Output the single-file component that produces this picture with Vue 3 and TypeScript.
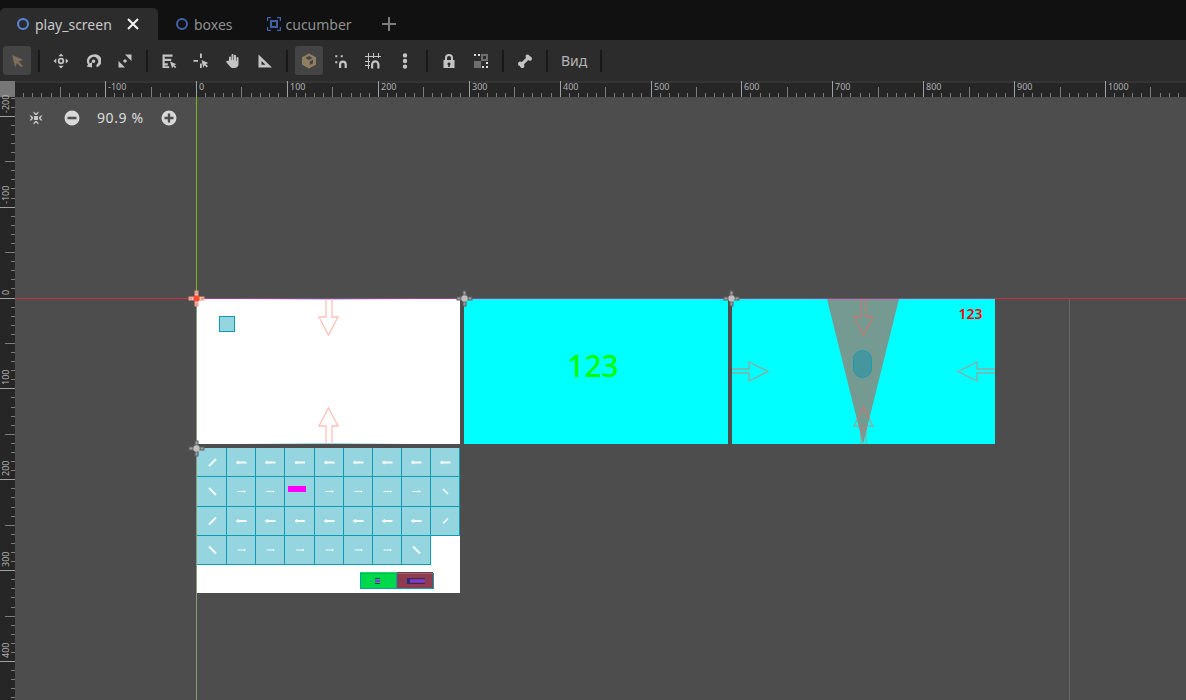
<script setup lang="ts">
const ORIGIN_X = 196.5
const ORIGIN_Y = 298
const SCALE = 0.909

interface Tick { p: number; len: number; major: boolean }
interface Label { p: number; t: string }

function ticks(from: number, to: number, origin: number): Tick[] {
  const out: Tick[] = []
  for (let v = from; v <= to; v += 10) {
    const p = Math.floor(origin + v * SCALE) + 0.5
    out.push({ p, len: v % 100 === 0 ? 16 : v % 50 === 0 ? 10 : 4, major: v % 100 === 0 })
  }
  return out
}

const hTicks = ticks(-200, 1100, ORIGIN_X).filter(t => t.p > 15)
const vTicks = ticks(-220, 450, ORIGIN_Y).filter(t => t.p > 97)

const hLabels: Label[] = []
for (let v = -100; v <= 1000; v += 100) hLabels.push({ p: Math.floor(ORIGIN_X + v * SCALE), t: String(v) })
const vLabels: Label[] = []
for (let v = -200; v <= 400; v += 100) vLabels.push({ p: Math.floor(ORIGIN_Y + v * SCALE), t: String(v) })

const xs = [197, 226, 255, 284, 314, 343, 372, 401, 430, 459]
const ys = [448, 476, 506, 535, 564]
const rows = [9, 9, 9, 8]

interface Cell { x: number; y: number; w: number; h: number; kind: string }
const cells: Cell[] = []
rows.forEach((n, r) => {
  for (let c = 0; c < n; c++) {
    let kind = r % 2 === 0 ? 'left' : 'right'
    if (c === 0) kind = r % 2 === 0 ? 'up' : 'down'
    if (c === n - 1 && r === 1) kind = 'downThin'
    if (c === n - 1 && r === 2) kind = 'upThin'
    if (c === n - 1 && r === 3) kind = 'down'
    if (r === 1 && c === 3) kind = 'none'
    cells.push({ x: xs[c], y: ys[r], w: xs[c + 1] - xs[c], h: ys[r + 1] - ys[r], kind })
  }
})

const handles = [
  { x: 464, y: 298 },
  { x: 731, y: 298 },
  { x: 196, y: 448 },
]

type Item = { id: string; active?: boolean; d: string; tone?: string; rule?: 'nonzero' | 'evenodd' }
const groups: Item[][] = [
  [{ id: 'select', active: true, tone: 'brown', d: 'M3 2l11 4.800-4.500 1.700 4.300 4.200-1.600 1.600-4.200-4.300-1.700 4.500z' }],
  [
    { id: 'move', d: 'M8 .5l2.600 2.800H5.400zM8 15.500l-2.600-2.800h5.200zM.5 8l2.800-2.600v5.200zM15.500 8l-2.800 2.600V5.400zM8 4.800a3.200 3.200 0 1 0 0 6.400 3.200 3.200 0 0 0 0-6.400zM8 6.600a1.400 1.400 0 1 1 0 2.800 1.400 1.400 0 0 1 0-2.800z' },
    { id: 'rotate', d: 'M8.500 1.500a6.500 6.500 0 0 0-5.300 10.300L1.500 13.500 7 14.500V9l-2.200 1.500A4.400 4.400 0 1 1 11.500 11.800V14.200A6.500 6.500 0 0 0 8.500 1.500zM8.500 6.500a1.800 1.800 0 1 0 0 3.600 1.800 1.800 0 0 0 0-3.600z' },
    { id: 'scale', d: 'M8 1.500H14.500V8zM1.500 8V14.500H8zM8 5.900L10.100 8 8 10.100 5.900 8z' },
  ],
  [
    { id: 'list', d: 'M1.500 1.500h10v2.200H3.700v2.100h6.500V8H3.700v2.300h3.100v2.200H3.700v.8h4.500v1.700H1.500zM9 8.500l6.500 2.700-2.300.9 2 2-1.100 1.100-2-2-.9 2.300z' },
    { id: 'target', d: 'M.5 7h4.500v1.800H.5zM7 .5h1.800v4.500H7zM7 10.500h1.800v4.500H7zM8.500 7l6.800 3-2.500 1 2.200 2.300-1.300 1.300-2.300-2.300-1 2.600z' },
    { id: 'hand', d: 'M4 7.500V4.500a1 1 0 0 1 2 0V7h.500V2a1 1 0 0 1 2 0v5H9V2.800a1 1 0 0 1 2 0V8h.500V5a1 1 0 0 1 2 0v6.300c0 2.300-1.800 3.700-4 3.700H8c-1.500 0-2.400-.8-3.200-1.800L1.500 9.500c-.8-1 .5-2.200 1.400-1.400z' },
    { id: 'square', d: 'M1.500 1.500L15 14.500H1.500zM4.500 8v3.800h4z' },
  ],
  [
    { id: 'box', active: true, tone: 'tan', d: 'M8 .5l7 3.800v7.400L8 15.500l-7-3.800V4.300zM8 3L4.500 5 8 7l3.500-2zM8.800 8.500v3.500l3.200-1.800V6.700z' },
    { id: 'snap', d: 'M2.300 2.300h2v2h-2zM7.700 2.300h2v2h-2zM2.300 8.300h2v2h-2zM6 15v-3.500a3.900 3.900 0 0 1 7.800 0V15h-2.200v-3.500a1.700 1.700 0 0 0-3.400 0V15z' },
    { id: 'grid', rule: 'nonzero', d: 'M3 0h1v16H3zM8 0h1v5H8zM13 0h1v5h-1zM0 3h16v1H0zM0 8h5v1H0zM0 12h5v1H0zM6 15.500v-4a4.200 4.200 0 0 1 8.500 0v4h-2.200v-4a2 2 0 0 0-4.100 0v4z' },
    { id: 'more', d: 'M8 .2a2.200 2.200 0 1 0 0 4.400 2.200 2.200 0 0 0 0-4.400zM8 5.800a2.200 2.200 0 1 0 0 4.400 2.200 2.200 0 0 0 0-4.400zM8 11.400a2.200 2.200 0 1 0 0 4.400 2.200 2.200 0 0 0 0-4.400z' },
  ],
  [
    { id: 'lock', d: 'M8 1a4 4 0 0 0-4 4v2H2.500v8h11V7H12V5a4 4 0 0 0-4-4zm0 2a2 2 0 0 1 2 2v2H6V5a2 2 0 0 1 2-2zm0 6.500a1.500 1.500 0 0 1 .8 2.800V14H7.200v-1.700A1.500 1.500 0 0 1 8 9.500z' },
    { id: 'group', tone: 'dim', d: 'M1 8h7v7H1zM8 1h7v7H8z M10 3v3h3V3z' },
  ],
  [
    { id: 'bone', d: 'M10.500 1.500a2.300 2.300 0 0 1 2.200 1.800 2.300 2.300 0 0 1 .9 4.400c-.9.300-1.800 0-2.400-.6L6.900 11.400c.6.700.7 1.700.3 2.500a2.300 2.300 0 0 1-4.300-.8 2.300 2.300 0 0 1-.6-4.400c.8-.4 1.800-.2 2.500.4l4.400-4.300c-.7-.7-.8-1.700-.4-2.600.4-.5 1-.7 1.700-.7z' },
  ],
]
</script>

<template>
  <div class="app">
    <div class="tabs">
      <div class="tab current">
        <span class="ring"></span>
        <span class="name">play_screen</span>
        <svg class="close" viewBox="0 0 12 12" width="12" height="12"><path d="M1 1l10 10M11 1L1 11" /></svg>
      </div>
      <div class="tab second">
        <span class="ring deep"></span>
        <span class="name">boxes</span>
      </div>
      <div class="tab">
        <svg class="node" viewBox="0 0 14 14" width="14" height="14">
          <path d="M.5 4V.5H4M10 .5h3.500V4M13.500 10v3.500H10M4 13.500H.5V10" />
          <rect x="4" y="4" width="6" height="6" />
        </svg>
        <span class="name">cucumber</span>
      </div>
      <svg class="add" viewBox="0 0 14 14" width="14" height="14"><path d="M7 0v14M0 7h14" /></svg>
    </div>

    <div class="toolbar">
      <template v-for="(group, i) in groups" :key="i">
        <span v-if="i > 0" class="sep"></span>
        <button v-for="item in group" :key="item.id" class="tool">
          <span class="face" :class="{ on: item.active }">
            <svg viewBox="0 0 16 16" width="16" height="16" :class="item.tone">
              <path :d="item.d" :fill-rule="item.rule ?? 'evenodd'" />
              <template v-if="item.id === 'group'">
                <rect x="1" y="1" width="2" height="2" fill="#e0e0e0" />
                <rect x="5" y="1" width="2" height="2" fill="#e0e0e0" />
                <rect x="13" y="9" width="2" height="2" fill="#e0e0e0" />
                <rect x="13" y="13" width="2" height="2" fill="#e0e0e0" />
                <rect x="9" y="13" width="2" height="2" fill="#e0e0e0" />
              </template>
            </svg>
          </span>
        </button>
      </template>
      <span class="sep"></span>
      <span class="menu">Вид</span>
      <span class="sep"></span>
    </div>

    <div class="workspace">
      <div class="corner"></div>
      <svg class="ruler-top" viewBox="15 81 1171 16" width="1171" height="16">
        <rect x="15" y="81" width="1171" height="2" fill="#343434" />
        <line v-for="t in hTicks" :key="t.p" :x1="t.p" :x2="t.p" :y1="97 - t.len" y2="97" :stroke="t.major ? '#a0a0a0' : '#7c7c7c'" />
        <text v-for="l in hLabels" :key="l.t" :x="l.p + 3" y="90" class="rule-text">{{ l.t }}</text>
      </svg>
      <svg class="ruler-left" viewBox="0 97 15 603" width="15" height="603">
        <line v-for="t in vTicks" :key="t.p" :y1="t.p" :y2="t.p" :x1="15 - t.len" x2="15" :stroke="t.major ? '#a0a0a0' : '#7c7c7c'" />
        <text v-for="l in vLabels" :key="l.t" class="rule-text" :transform="`translate(9 ${l.p - 3}) rotate(-90)`">{{ l.t }}</text>
      </svg>

      <div class="canvas">
        <svg class="scene" viewBox="15 97 1171 603" width="1171" height="603">
          <defs>
            <linearGradient id="edge" x1="0" x2="1" y1="0" y2="0">
              <stop offset="0" stop-color="#95d5df" stop-opacity="0" />
              <stop offset=".5" stop-color="#95d5df" />
              <stop offset="1" stop-color="#95d5df" stop-opacity="0" />
            </linearGradient>
          </defs>
          <g shape-rendering="crispEdges">
            <rect x="197" y="299" width="263" height="145" fill="#ffffff" />
            <rect x="464" y="299" width="264" height="145" fill="#00ffff" />
            <rect x="732" y="299" width="263" height="145" fill="#00ffff" />
            <rect x="197" y="448" width="263" height="145" fill="#ffffff" />
            <rect x="240" y="299" width="175" height="1" fill="url(#edge)" />
            <rect x="240" y="443" width="175" height="1" fill="url(#edge)" />
            <line x1="1069.500" x2="1069.500" y1="298" y2="700" stroke="#666666" />
          </g>

          <path d="M827 299H899L863 444z" fill="#759a92" />
          <rect x="853.500" y="350.500" width="18" height="27" rx="9" fill="#45969f" stroke="#1a9bb0" />

          <g fill="none" stroke-width="1.300">
            <g stroke="#ffc0b8">
              <path d="M326 299V317H319L328.500 335L338 317H332V299" />
              <path d="M326 444V426H319L328.500 408L338 426H332V444" />
            </g>
            <g stroke="rgba(255,100,90,.55)">
              <path d="M861 299V317H854L863.500 335L873 317H866V299" />
              <path d="M861 444V426H854L863.500 407L873 426H866V444" />
              <path d="M732 369H749V362L768 371.500L749 381V373H732" />
              <path d="M995 369H977V362L958 371.500L977 381V373H995" />
            </g>
          </g>

          <rect x="219.500" y="316.500" width="15" height="15" fill="#95d5df" stroke="#0a9db4" />

          <text x="593" y="377" text-anchor="middle" class="big">123</text>
          <text x="970.500" y="319" text-anchor="middle" class="small">123</text>

          <g shape-rendering="crispEdges">
            <rect v-for="(c, i) in cells" :key="'f' + i" :x="c.x" :y="c.y" :width="c.w + 1" :height="c.h + 1" fill="#95d5df" />
            <path
              v-for="(c, i) in cells"
              :key="'l' + i"
              :d="`M${c.x + c.w + 0.5} ${c.y}V${c.y + c.h + 1}M${c.x} ${c.y + c.h + 0.5}H${c.x + c.w + 1}`"
              fill="none"
              stroke="#0a9db4"
            />
          </g>
          <g v-for="(c, i) in cells" :key="'a' + i" :transform="`translate(${c.x + c.w / 2 + 1} ${c.y + c.h / 2 + 0.5})`" fill="none" stroke="#f4fbfc">
            <path v-if="c.kind === 'left'" d="M-5 0H5" stroke-width="2" />
            <path v-if="c.kind === 'left'" d="M-5 0L-3 -1.500V1.500z" stroke-width="1" />
            <path v-if="c.kind === 'right'" d="M-4 0H4M3 -1V1" stroke-width="1" />
            <path v-if="c.kind === 'up'" d="M-3.500 3.500L3.500 -3.500" stroke-width="2" />
            <path v-if="c.kind === 'down'" d="M-3.500 -3.500L3.500 3.500" stroke-width="2" />
            <path v-if="c.kind === 'upThin'" d="M-2.500 2.500L2.500 -2.500" stroke-width="1.600" />
            <path v-if="c.kind === 'downThin'" d="M-2.500 -2.500L2.500 2.500" stroke-width="1.600" />
          </g>
          <rect x="288" y="486" width="18" height="6" fill="#ff00ff" shape-rendering="crispEdges" />

          <g shape-rendering="crispEdges">
            <rect x="360.500" y="573.500" width="36" height="15" fill="#00d84c" stroke="#0a9db4" />
            <rect x="396.500" y="573.500" width="37" height="15" fill="#903c50" stroke="#0a9db4" />
            <rect x="360" y="572" width="37" height="1" fill="#00ff00" />
            <rect x="397" y="572" width="36" height="1" fill="#ff0000" />
            <rect x="375" y="578" width="5" height="1" fill="#2a2a80" />
            <rect x="375" y="580" width="5" height="2" fill="#7a3ae0" />
            <rect x="375" y="583" width="5" height="1" fill="#2a2a80" />
            <rect x="407" y="578" width="3" height="6" fill="#2a2a80" />
            <rect x="410" y="578" width="15" height="1" fill="#2a2a80" />
            <rect x="410" y="580" width="15" height="2" fill="#7a3ae0" />
            <rect x="410" y="583" width="15" height="1" fill="#2a2a80" />
          </g>

          <g shape-rendering="crispEdges">
            <line x1="196.500" x2="196.500" y1="97" y2="298" stroke="#7ab51d" />
            <line x1="196.500" x2="196.500" y1="298" y2="700" stroke="#7fa07f" />
            <line x1="15" x2="1186" y1="298.500" y2="298.500" stroke="#c8304a" />
            <line x1="197" x2="995" y1="298.500" y2="298.500" stroke="#a83c8c" />
          </g>

          <g v-for="h in handles" :key="h.x" :transform="`translate(${h.x + 0.5} ${h.y + 0.5})`">
            <path d="M-2 -8h4v16h-4zM-8 -2h16v4h-16z" fill="#5f5f5f" />
            <path d="M-1 -7h2v3h-2zM-1 4h2v3h-2zM-7 -1h3v2h-3zM4 -1h3v2h-3z" fill="#a0a0a0" />
            <circle r="3.200" fill="#c0c0c0" />
          </g>
          <g transform="translate(196.500 298.500)">
            <path d="M-2 -8h4v16h-4zM-8 -2h16v4h-16z" fill="#e8a090" />
            <path d="M-1 -4h2v8h-2zM-4 -1h8v2h-8z" fill="#ffffff" />
            <circle r="3.200" fill="#ff4a30" />
          </g>
        </svg>

        <div class="zoom">
          <svg class="fit" viewBox="0 0 16 16" width="16" height="16">
            <path d="M6 6h4v4H6zM5.500 1.500L8 3.500l2.500-2v1.600L8.700 5H7.300L5.500 3.100zM5.500 14.500L8 12.500l2.500 2v-1.600L8.700 11H7.300L5.500 12.900zM1.500 5.500L3.500 8l-2 2.500h1.600L5 8.700V7.300L3.100 5.500zM14.500 5.500L12.500 8l2 2.500h-1.600L11 8.700V7.300L12.900 5.500z" />
          </svg>
          <svg class="zoom-btn minus" viewBox="0 0 16 16" width="16" height="16">
            <path fill-rule="evenodd" d="M8 .5a7.500 7.500 0 1 0 0 15 7.500 7.500 0 0 0 0-15zM3.500 6.800h9v2.400h-9z" />
          </svg>
          <span class="percent">90.9 %</span>
          <svg class="zoom-btn plus" viewBox="0 0 16 16" width="16" height="16">
            <path fill-rule="evenodd" d="M8 .5a7.500 7.500 0 1 0 0 15 7.500 7.500 0 0 0 0-15zM6.800 3.500h2.400v3.300h3.300v2.400H9.200v3.300H6.800V9.200H3.500V6.800h3.300z" />
          </svg>
        </div>
      </div>
    </div>
  </div>
</template>

<style>
html, body { margin: 0; background: #4d4d4d; overflow: hidden; }
</style>

<style scoped>
.app {
  width: 1186px;
  height: 700px;
  display: flex;
  flex-direction: column;
  overflow: hidden;
  font-family: "Noto Sans", sans-serif;
  background: #4d4d4d;
}

.tabs {
  height: 40px;
  flex: none;
  display: flex;
  align-items: flex-end;
  background: #111111;
}
.tab {
  height: 32px;
  display: flex;
  align-items: center;
  gap: 6px;
  padding: 0 17px;
  font-size: 14px;
  color: #8f8f8f;
  box-sizing: border-box;
}
.tab.current {
  width: 158px;
  color: #c8c8c8;
  background: #2c2c2c;
  border-radius: 5px 5px 0 0;
}
.tab.second { margin-left: 1px; }
.ring {
  width: 8px;
  height: 8px;
  border: 2px solid #5a87d8;
  border-radius: 50%;
  flex: none;
}
.ring.deep { border-color: #3f62a8; }
.close {
  margin-left: 9px;
  flex: none;
  fill: none;
  stroke: #f2f2f2;
  stroke-width: 2;
}
.node { flex: none; margin-right: -1px; }
.node path { fill: none; stroke: #3f62a8; stroke-width: 1.400; }
.node rect { fill: none; stroke: #3f62a8; stroke-width: 2; }
.add {
  margin: 0 0 9px 13px;
  fill: none;
  stroke: #7d7d7d;
  stroke-width: 2;
}

.toolbar {
  height: 41px;
  flex: none;
  display: flex;
  align-items: center;
  padding-left: 1px;
  background: #2c2c2c;
  box-sizing: border-box;
}
.tool {
  width: 32px;
  height: 29px;
  padding: 0;
  border: 0;
  background: none;
  display: flex;
  justify-content: center;
}
.face {
  width: 28px;
  height: 29px;
  border-radius: 3px;
  display: flex;
  align-items: center;
  justify-content: center;
}
.face.on { background: #444444; }
.face svg { fill: #c4c4c4; }
.face svg.brown { fill: #7d6f58; }
.face svg.tan { fill: #8f7e62; }
.face svg.dim { fill: #6e6e6e; }
.sep {
  width: 2px;
  height: 22px;
  margin: 0 5px;
  background: #181818;
  flex: none;
}
.menu {
  padding: 0 8px;
  font-size: 14px;
  color: #b4b4b4;
}

.workspace {
  flex: 1;
  min-height: 0;
  display: grid;
  grid-template-columns: 15px 1fr;
  grid-template-rows: 16px 1fr;
}
.corner { background: #787878; }
.ruler-top, .ruler-left { display: block; background: #262626; overflow: visible; }
.rule-text {
  font-family: "Noto Sans", sans-serif;
  font-size: 9px;
  fill: #b0b0b0;
}
.canvas {
  position: relative;
  overflow: hidden;
  background: #4d4d4d;
}
.scene { display: block; }
.big {
  font-family: "Noto Sans", sans-serif;
  font-size: 30px;
  font-weight: 500;
  fill: #00ff00;
}
.small {
  font-family: "Noto Sans", sans-serif;
  font-size: 14px;
  font-weight: 600;
  fill: #ff0000;
}

.zoom {
  position: absolute;
  left: 13px;
  top: 13px;
  display: flex;
  align-items: center;
  margin-top: -2px;
}
.fit { fill: #c8c8c8; margin-right: 20px; }
.zoom-btn { fill: #d8d8d8; }
.percent {
  margin: 0 18px 0 17px;
  width: 46px;
  font-size: 14px;
  letter-spacing: 0.6px;
  color: #dddddd;
  white-space: nowrap;
}
</style>
